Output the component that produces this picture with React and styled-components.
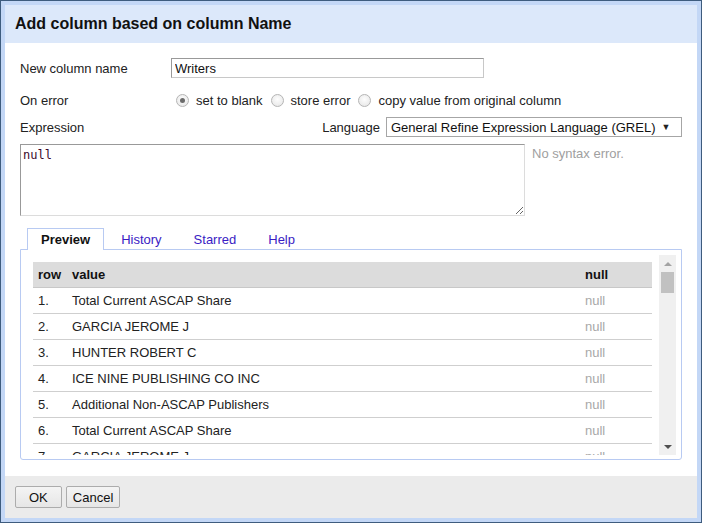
import React from "react";
import styled, { createGlobalStyle } from "styled-components";

const Global = createGlobalStyle`
  html, body {
    margin: 0;
    padding: 0;
    background: #fff;
  }
  body {
    font-family: "Liberation Sans", Arial, sans-serif;
    font-size: 13px;
    color: #222;
  }
`;

const Frame = styled.div`
  width: 702px;
  height: 523px;
  box-sizing: border-box;
  border: 1px solid #3e5c7e;
  background: #c3d7f6;
  padding: 4px;
`;

const Dialog = styled.div`
  height: 100%;
  display: flex;
  flex-direction: column;
  background: #fff;
`;

const Header = styled.div`
  height: 38px;
  flex: none;
  background: #dce8fa;
  display: flex;
  align-items: center;
  padding-left: 10px;
  font-size: 16px;
  font-weight: bold;
  color: #111;
`;

const Body = styled.div`
  flex: 1;
  padding: 15px;
  display: flex;
  flex-direction: column;
`;

const Row = styled.div`
  display: flex;
  align-items: center;
  height: ${(p) => p.h || 20}px;
  margin-top: ${(p) => p.mt || 0}px;
`;

const Label = styled.div`
  width: 151px;
  flex: none;
  color: #222;
`;

const TextInput = styled.input`
  width: 313px;
  height: 20px;
  box-sizing: border-box;
  border: 1px solid;
  border-color: #999 #c8c8c8 #c8c8c8 #999;
  padding: 0 3px;
  font: 13px "Liberation Sans", Arial, sans-serif;
  color: #111;
  outline: none;
`;

const RadioGroup = styled.div`
  display: flex;
  align-items: center;
  padding-left: 5px;
`;

const RadioOption = styled.label`
  display: flex;
  align-items: center;
  gap: 7px;
  margin-right: 8px;
  color: #222;
`;

const RadioDot = styled.span`
  width: 13px;
  height: 13px;
  box-sizing: border-box;
  border-radius: 50%;
  border: 1px solid #b5b5b5;
  background: radial-gradient(circle at 50% 40%, #fdfdfd, #e4e4e4);
  display: flex;
  align-items: center;
  justify-content: center;
  &::after {
    content: "";
    width: 5px;
    height: 5px;
    border-radius: 50%;
    background: ${(p) => (p.checked ? "#6b6b6b" : "transparent")};
  }
`;

const Spacer = styled.div`
  flex: 1;
`;

const LangLabel = styled.span`
  margin-right: 6px;
  color: #222;
`;

const Select = styled.div`
  width: 296px;
  height: 20px;
  box-sizing: border-box;
  border: 1px solid #a6a6a6;
  display: flex;
  align-items: center;
  gap: 6px;
  padding: 0 4px;
  color: #111;
  font-size: 13px;
`;

const Arrow = styled.span`
  font-size: 9px;
  color: #222;
`;

const ExprRow = styled.div`
  display: flex;
  margin-top: 7px;
  height: 72px;
`;

const ExprArea = styled.textarea`
  width: 505px;
  height: 72px;
  box-sizing: border-box;
  border: 1px solid;
  border-color: #999 #dcdcdc #dcdcdc #999;
  padding: 3px 2px;
  font: 12px "DejaVu Sans Mono", "Liberation Mono", monospace;
  color: #3b0a2c;
  outline: none;
  resize: both;
`;

const Status = styled.div`
  margin-left: 7px;
  padding-top: 2px;
  color: #a0a0a0;
`;

const Tabs = styled.div`
  display: flex;
  margin-top: 12px;
  padding-left: 7px;
  height: 21px;
  position: relative;
  z-index: 1;
`;

const Tab = styled.div`
  box-sizing: border-box;
  height: 22px;
  padding: 0 ${(p) => (p.active ? 13 : 14)}px;
  margin-right: 2px;
  display: flex;
  align-items: center;
  border: 1px solid ${(p) => (p.active ? "#b8caf2" : "transparent")};
  border-bottom: none;
  background: ${(p) => (p.active ? "#fff" : "transparent")};
  font-weight: ${(p) => (p.active ? "bold" : "normal")};
  color: ${(p) => (p.active ? "#111" : "#3a1cc4")};
`;

const Panel = styled.div`
  height: 211px;
  box-sizing: border-box;
  border: 1px solid #b8caf2;
  border-radius: 0 0 3px 3px;
  padding: 5px 5px 4px 12px;
  display: flex;
`;

const TableClip = styled.div`
  flex: 1;
  overflow: hidden;
  padding: 7px 7px 0 0;
`;

const Table = styled.table`
  width: 100%;
  border-collapse: collapse;
  font-size: 13px;
`;

const Th = styled.th`
  background: #dcdcdc;
  height: 25px;
  padding: 0 5px;
  text-align: left;
  font-weight: bold;
  color: #111;
  border-bottom: 1px solid #c8c8c8;
  width: ${(p) => p.w || "auto"};
`;

const Td = styled.td`
  height: 25px;
  padding: 0 5px;
  border-bottom: 1px solid #cfcfcf;
  color: ${(p) => (p.muted ? "#a8a8a8" : "#222")};
  white-space: nowrap;
`;

const Scrollbar = styled.div`
  width: 17px;
  flex: none;
  background: #f0f0f0;
  display: flex;
  flex-direction: column;
  align-items: center;
`;

const ScrollArrow = styled.div`
  height: 17px;
  width: 17px;
  display: flex;
  align-items: center;
  justify-content: center;
  &::after {
    content: "";
    border-left: 4px solid transparent;
    border-right: 4px solid transparent;
    ${(p) =>
      p.up
        ? "border-bottom: 4px solid #a3a3a3;"
        : "border-top: 4px solid #505050;"}
  }
`;

const Thumb = styled.div`
  width: 13px;
  height: 21px;
  background: #c1c1c1;
`;

const Footer = styled.div`
  height: 42px;
  flex: none;
  background: #ebebeb;
  display: flex;
  align-items: center;
  gap: 4px;
  padding-left: 10px;
`;

const Button = styled.button`
  height: 22px;
  box-sizing: border-box;
  padding: 0 ${(p) => p.px || 8}px;
  border: 1px solid #acacac;
  border-radius: 2px;
  background: linear-gradient(#f4f4f4, #e6e6e6);
  font: 13px "Liberation Sans", Arial, sans-serif;
  color: #111;
`;

const rows = [
  "Total Current ASCAP Share",
  "GARCIA JEROME J",
  "HUNTER ROBERT C",
  "ICE NINE PUBLISHING CO INC",
  "Additional Non-ASCAP Publishers",
  "Total Current ASCAP Share",
  "GARCIA JEROME J",
];

export default function App() {
  return (
    <>
      <Global />
      <Frame>
        <Dialog>
          <Header>Add column based on column Name</Header>
          <Body>
            <Row>
              <Label>New column name</Label>
              <TextInput defaultValue="Writers" />
            </Row>
            <Row mt={11} h={22}>
              <Label>On error</Label>
              <RadioGroup>
                <RadioOption>
                  <RadioDot checked />
                  set to blank
                </RadioOption>
                <RadioOption>
                  <RadioDot />
                  store error
                </RadioOption>
                <RadioOption>
                  <RadioDot />
                  copy value from original column
                </RadioOption>
              </RadioGroup>
            </Row>
            <Row mt={6}>
              <Label>Expression</Label>
              <Spacer />
              <LangLabel>Language</LangLabel>
              <Select>
                General Refine Expression Language (GREL)
                <Arrow>▼</Arrow>
              </Select>
            </Row>
            <ExprRow>
              <ExprArea defaultValue="null" spellCheck={false} />
              <Status>No syntax error.</Status>
            </ExprRow>
            <Tabs>
              <Tab active>Preview</Tab>
              <Tab>History</Tab>
              <Tab>Starred</Tab>
              <Tab>Help</Tab>
            </Tabs>
            <Panel>
              <TableClip>
                <Table>
                  <thead>
                    <tr>
                      <Th w="24px">row</Th>
                      <Th>value</Th>
                      <Th w="62px">null</Th>
                    </tr>
                  </thead>
                  <tbody>
                    {rows.map((v, i) => (
                      <tr key={i}>
                        <Td>{i + 1}.</Td>
                        <Td>{v}</Td>
                        <Td muted>null</Td>
                      </tr>
                    ))}
                  </tbody>
                </Table>
              </TableClip>
              <Scrollbar>
                <ScrollArrow up />
                <Thumb />
                <Spacer />
                <ScrollArrow />
              </Scrollbar>
            </Panel>
          </Body>
          <Footer>
            <Button px={13}>OK</Button>
            <Button px={6}>Cancel</Button>
          </Footer>
        </Dialog>
      </Frame>
    </>
  );
}
